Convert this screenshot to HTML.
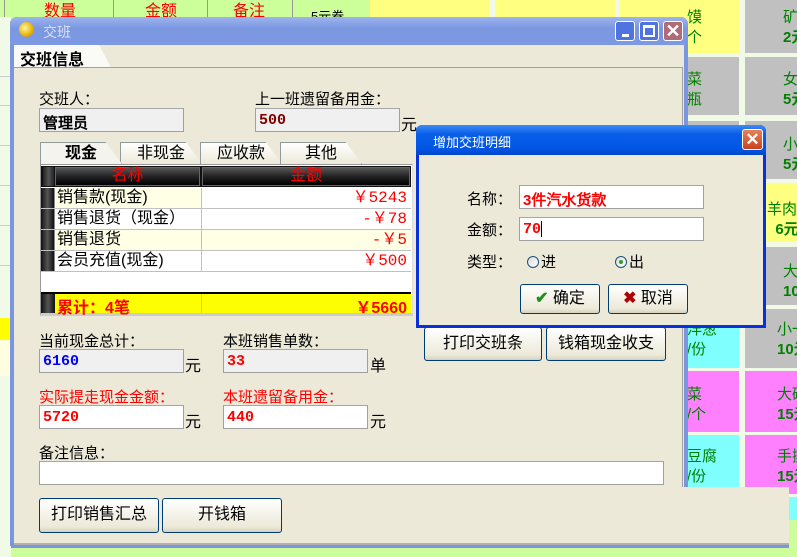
<!DOCTYPE html>
<html><head><meta charset="utf-8"><style>
*{box-sizing:border-box;margin:0;padding:0}
body{width:797px;height:557px;overflow:hidden;position:relative;background:#ccff99;font-family:"Liberation Sans","WenQuanYi Zen Hei","Noto Sans CJK SC",sans-serif;font-size:15px;color:#000}
.a{position:absolute;white-space:nowrap}
.tile{position:absolute;color:#008000;font-size:15px;text-align:left;line-height:20px;white-space:nowrap}
.inp{position:absolute;background:#f0f0f0;border:1px solid #a0a0a0;border-top-color:#a6a6a6;font-weight:bold;font-family:"Liberation Mono","WenQuanYi Zen Hei",monospace;font-size:15px;padding:3px 0 0 3px;height:24px;white-space:nowrap}
.w{background:#fff}
.btn{position:absolute;border:1px solid #003c74;border-radius:3px;background:linear-gradient(#fff,#ece9d8 85%,#d6d0c0);text-align:center;font-size:16px;line-height:32px;white-space:nowrap}
.tab{position:absolute;top:142px;height:22px;border:1px solid #919b9c;border-bottom:none;background:linear-gradient(#fff,#ece9d8);font-size:16px;text-align:center;line-height:22px;clip-path:polygon(0 0,80% 0,100% 100%,0 100%)}
.row{position:absolute;left:41px;width:370px;height:21px;border-bottom:1px solid #c0c0c0;font-size:16px;line-height:20px;white-space:nowrap}
.row .n{position:absolute;left:16px;top:0}
.row .v{position:absolute;right:4px;top:0;color:#f00;font-family:"Liberation Mono",monospace}
.row .s{position:absolute;left:0;top:0;width:14px;height:20px;background:linear-gradient(90deg,#111,#555,#111);border-right:1px solid #888}
.row .d{position:absolute;left:160px;top:0;width:1px;height:21px;background:#c0c0c0}
</style></head><body>
<div class="a" style="left:0;top:0;width:11px;height:557px;background:#f0fae6"></div>
<div class="a" style="left:0;top:76px;width:11px;height:1px;background:#ccc"></div>
<div class="a" style="left:0;top:105px;width:11px;height:1px;background:#ccc"></div>
<div class="a" style="left:0;top:145px;width:11px;height:1px;background:#ccc"></div>
<div class="a" style="left:0;top:185px;width:11px;height:1px;background:#ccc"></div>
<div class="a" style="left:0;top:225px;width:11px;height:1px;background:#ccc"></div>
<div class="a" style="left:0;top:265px;width:11px;height:1px;background:#ccc"></div>
<div class="a" style="left:0;top:318px;width:11px;height:22px;background:#ff0"></div>
<div class="a" style="left:0;top:340px;width:11px;height:36px;background:#ffffe0"></div>
<div class="a" style="left:0;top:0;width:370px;height:17px;background:#ccff99"></div>
<div class="a" style="left:4px;top:0;width:1px;height:17px;background:#999"></div>
<div class="a" style="left:113px;top:0;width:1px;height:17px;background:#999"></div>
<div class="a" style="left:207px;top:0;width:1px;height:17px;background:#999"></div>
<div class="a" style="left:292px;top:0;width:1px;height:17px;background:#999"></div>
<div class="a" style="left:44px;top:-3px;color:#f00;font-size:16px">数量</div>
<div class="a" style="left:145px;top:-3px;color:#f00;font-size:16px">金额</div>
<div class="a" style="left:233px;top:-3px;color:#f00;font-size:16px">备注</div>
<div class="a" style="left:311px;top:6px;font-size:13px">5元卷</div>
<div class="a" style="left:370px;top:0;width:427px;height:557px;background:#f0fae6"></div>
<div class="a" style="left:370px;top:0;width:120px;height:53px;background:#ffff80"></div>
<div class="a" style="left:495px;top:0;width:120px;height:53px;background:#ffff80"></div>
<div class="a" style="left:620px;top:0;width:119px;height:53px;background:#ffff80"></div>
<div class="a" style="left:745px;top:0;width:52px;height:53px;background:#c0c0c0"></div>
<div class="a" style="left:620px;top:57px;width:119px;height:58px;background:#c0c0c0"></div>
<div class="a" style="left:745px;top:57px;width:52px;height:58px;background:#c0c0c0"></div>
<div class="a" style="left:620px;top:121px;width:119px;height:58px;background:#c0c0c0"></div>
<div class="a" style="left:745px;top:121px;width:52px;height:58px;background:#c0c0c0"></div>
<div class="a" style="left:620px;top:183px;width:119px;height:59px;background:#c0c0c0"></div>
<div class="a" style="left:745px;top:183px;width:52px;height:59px;background:#ffff80"></div>
<div class="a" style="left:620px;top:247px;width:119px;height:58px;background:#c0c0c0"></div>
<div class="a" style="left:745px;top:247px;width:52px;height:58px;background:#c0c0c0"></div>
<div class="a" style="left:620px;top:309px;width:119px;height:59px;background:#80ffff"></div>
<div class="a" style="left:745px;top:309px;width:52px;height:59px;background:#c0c0c0"></div>
<div class="a" style="left:620px;top:371px;width:119px;height:61px;background:#ff80ff"></div>
<div class="a" style="left:745px;top:371px;width:52px;height:61px;background:#ff80ff"></div>
<div class="a" style="left:620px;top:435px;width:119px;height:59px;background:#80ffff"></div>
<div class="a" style="left:745px;top:435px;width:52px;height:59px;background:#ff80ff"></div>
<div class="a" style="left:745px;top:497px;width:52px;height:23px;background:#80ffff"></div>
<div class="a" style="left:370px;top:520px;width:427px;height:37px;background:#ccff99"></div>
<div class="tile" style="left:687px;top:8px">馍<br>个</div>
<div class="tile" style="left:783px;top:8px">矿<br><b>2元</b></div>
<div class="tile" style="left:687px;top:70px">菜<br>瓶</div>
<div class="tile" style="left:783px;top:70px">女<br><b>5元</b></div>
<div class="tile" style="left:783px;top:135px">小<br><b>5元</b></div>
<div class="tile" style="left:767px;top:200px">羊肉<br>&nbsp;&nbsp;<b>6元</b></div>
<div class="tile" style="left:783px;top:262px">大<br><b>10元</b></div>
<div class="tile" style="left:687px;top:320px">洋葱<br>/份</div>
<div class="tile" style="left:777px;top:320px">小一<br><b>10元</b></div>
<div class="tile" style="left:687px;top:385px">菜<br>/个</div>
<div class="tile" style="left:777px;top:385px">大碗<br><b>15元</b></div>
<div class="tile" style="left:687px;top:447px">豆腐<br>/份</div>
<div class="tile" style="left:777px;top:447px">手撕<br><b>15元</b></div>
<div class="a" style="left:11px;top:545px;width:360px;height:12px;background:#ccff99;border-top:1px solid #aaa"></div>

<div class="a" style="left:10px;top:17px;width:678px;height:529px;background:#7a96df;border-radius:7px 7px 0 0"></div>
<div class="a" style="left:10px;top:17px;width:678px;height:28px;background:linear-gradient(#9db4ee,#7b97e0 40%,#7d99e3);border-radius:7px 7px 0 0"></div>
<div class="a" style="left:19px;top:22px;width:15px;height:15px;border-radius:50%;background:radial-gradient(circle at 40% 40%,#fff6a0,#e8b000 60%,#b07800)"></div>
<div class="a" style="left:43px;top:22px;color:#d8e0f8;font-size:14px">交班</div>
<div class="a" style="left:615px;top:21px;width:20px;height:20px;border:1px solid #fff;border-radius:3px;background:#4f74e0"><div class="a" style="left:6px;top:12px;width:7px;height:3px;background:#fff"></div></div>
<div class="a" style="left:639px;top:21px;width:20px;height:20px;border:1px solid #fff;border-radius:3px;background:#4f74e0"><div class="a" style="left:3px;top:3px;width:12px;height:12px;border:2px solid #fff;border-top-width:3px"></div></div>
<div class="a" style="left:663px;top:21px;width:20px;height:20px;border:1px solid #fff;border-radius:3px;background:#b06b7a;color:#fff;font-size:18px;line-height:18px;text-align:center;font-weight:bold">✕</div>
<div class="a" style="left:14px;top:45px;width:670px;height:498px;background:#ece9d8"></div>
<div class="a" style="left:14px;top:45px;width:97px;height:23px;background:#fafaf7;clip-path:polygon(0 0,88% 0,100% 100%,0 100%)"></div>
<div class="a" style="left:20px;top:46px;font-size:16px;font-weight:bold">交班信息</div>
<div class="a" style="left:14px;top:67px;width:669px;height:1px;background:#a0a0a0"></div>
<div class="a" style="left:682px;top:67px;width:1px;height:420px;background:#a0a0a0"></div>
<div class="a" style="left:39px;top:88px">交班人：</div>
<div class="inp" style="left:39px;top:108px;width:145px">管理员</div>
<div class="a" style="left:255px;top:88px">上一班遗留备用金：</div>
<div class="inp" style="left:255px;top:108px;width:145px;color:#800000">500</div>
<div class="a" style="left:401px;top:111px;font-size:16px">元</div>
<div class="tab" style="left:40px;width:82px;font-weight:bold;z-index:2;background:#f4f3ee">现金</div>
<div class="tab" style="left:120px;width:82px">非现金</div>
<div class="tab" style="left:200px;width:82px">应收款</div>
<div class="tab" style="left:280px;width:82px">其他</div>
<div class="a" style="left:40px;top:164px;width:373px;height:152px;background:#fff;border:1px solid #999;border-right-color:#ddd;border-bottom:3px solid #ccc"></div>
<div class="a" style="left:41px;top:166px;width:370px;height:21px;background:#111"></div>
<div class="a" style="left:43px;top:167px;width:11px;height:19px;background:linear-gradient(90deg,#222,#555,#222)"></div>
<div class="a" style="left:55px;top:167px;width:145px;height:19px;background:linear-gradient(#555,#222 50%,#000);border:1px solid #666;color:#f00;text-align:center;line-height:15px;font-size:16px">名称</div>
<div class="a" style="left:202px;top:167px;width:208px;height:19px;background:linear-gradient(#555,#222 50%,#000);border:1px solid #666;color:#f00;text-align:center;line-height:15px;font-size:16px">金额</div>
<div class="row" style="top:188px;background:linear-gradient(90deg,#ffffe6 160px,#fff 160px)"><div class="s"></div><span class="n">销售款(现金)</span><div class="d"></div><span class="v">￥5243</span></div>
<div class="row" style="top:209px;background:#fff"><div class="s"></div><span class="n">销售退货（现金）</span><div class="d"></div><span class="v">-￥78</span></div>
<div class="row" style="top:230px;background:#ffffe6"><div class="s"></div><span class="n">销售退货</span><div class="d"></div><span class="v">-￥5</span></div>
<div class="row" style="top:251px;background:#fff"><div class="s"></div><span class="n">会员充值(现金)</span><div class="d"></div><span class="v">￥500</span></div>
<div class="a" style="left:41px;top:292px;width:370px;height:21px;background:#ff0;border-top:2px solid #000;color:#f00;font-weight:bold;font-size:16px">
<div class="a" style="left:0;top:0;width:14px;height:19px;background:linear-gradient(90deg,#111,#555,#111)"></div>
<span class="a" style="left:16px;top:0">累计：4笔</span><div class="a" style="left:160px;top:0;width:1px;height:19px;background:#c0c0c0"></div><span class="a" style="right:4px;top:0">￥5660</span></div>
<div class="a" style="left:39px;top:330px">当前现金总计：</div>
<div class="inp" style="left:39px;top:349px;width:145px;color:#00f">6160</div>
<div class="a" style="left:185px;top:352px;font-size:16px">元</div>
<div class="a" style="left:223px;top:330px">本班销售单数：</div>
<div class="inp" style="left:223px;top:349px;width:145px;color:#f00">33</div>
<div class="a" style="left:370px;top:352px;font-size:16px">单</div>
<div class="a" style="left:39px;top:386px;color:#f00">实际提走现金金额：</div>
<div class="inp w" style="left:39px;top:405px;width:145px;color:#f00">5720</div>
<div class="a" style="left:185px;top:408px;font-size:16px">元</div>
<div class="a" style="left:223px;top:386px;color:#f00">本班遗留备用金：</div>
<div class="inp w" style="left:223px;top:405px;width:145px;color:#f00">440</div>
<div class="a" style="left:370px;top:408px;font-size:16px">元</div>
<div class="btn" style="left:424px;top:327px;width:118px;height:34px">打印交班条</div>
<div class="btn" style="left:546px;top:327px;width:120px;height:34px">钱箱现金收支</div>
<div class="a" style="left:39px;top:442px">备注信息：</div>
<div class="inp w" style="left:39px;top:461px;width:625px;height:24px"></div>
<div class="a" style="left:14px;top:487px;width:775px;height:58px;background:#ece9d8;border-bottom:2px solid #b0b0b0"></div>
<div class="a" style="left:11px;top:545px;width:778px;height:3px;background:#7a96df"></div>
<div class="btn" style="left:39px;top:498px;width:120px;height:35px">打印销售汇总</div>
<div class="btn" style="left:162px;top:498px;width:120px;height:35px">开钱箱</div>

<div class="a" style="left:416px;top:125px;width:350px;height:203px;background:#0831d9;border-radius:6px 6px 0 0"></div>
<div class="a" style="left:416px;top:125px;width:350px;height:30px;background:linear-gradient(#3d8af7,#0a5fe8 30%,#0055e5 80%,#0046c8);border-radius:6px 6px 0 0"></div>
<div class="a" style="left:433px;top:132px;color:#fff;font-size:13px">增加交班明细</div>
<div class="a" style="left:742px;top:129px;width:21px;height:21px;border:1px solid #fff;border-radius:3px;background:linear-gradient(#e8805c,#c8421c);color:#fff;font-size:17px;line-height:19px;text-align:center;font-weight:bold">✕</div>
<div class="a" style="left:419px;top:155px;width:344px;height:170px;background:#ece9d8"></div>
<div class="a" style="left:467px;top:188px">名称：</div>
<div class="inp w" style="left:519px;top:185px;width:185px;height:24px;color:#f00;font-family:'Liberation Sans','WenQuanYi Zen Hei',sans-serif">3件汽水货款</div>
<div class="a" style="left:467px;top:219px">金额：</div>
<div class="inp w" style="left:519px;top:217px;width:185px;height:24px;color:#f00">70<span style="display:inline-block;width:1px;height:16px;background:#000;vertical-align:middle"></span></div>
<div class="a" style="left:467px;top:251px">类型：</div>
<div class="a" style="left:527px;top:256px;width:12px;height:12px;border-radius:50%;border:1px solid #1c5180;background:linear-gradient(135deg,#dcdcd4,#fff)"></div>
<div class="a" style="left:541px;top:251px">进</div>
<div class="a" style="left:615px;top:256px;width:12px;height:12px;border-radius:50%;border:1px solid #1c5180;background:linear-gradient(135deg,#dcdcd4,#fff)"><div class="a" style="left:3px;top:3px;width:4px;height:4px;border-radius:50%;background:#2f9f2f"></div></div>
<div class="a" style="left:629px;top:251px">出</div>
<div class="btn" style="left:520px;top:284px;width:80px;height:30px;line-height:28px"><span style="color:#1f8f1f;font-weight:bold">✔</span> 确定</div>
<div class="btn" style="left:608px;top:284px;width:80px;height:30px;line-height:28px"><span style="color:#b00000;font-weight:bold">✖</span> 取消</div>
</body></html>
